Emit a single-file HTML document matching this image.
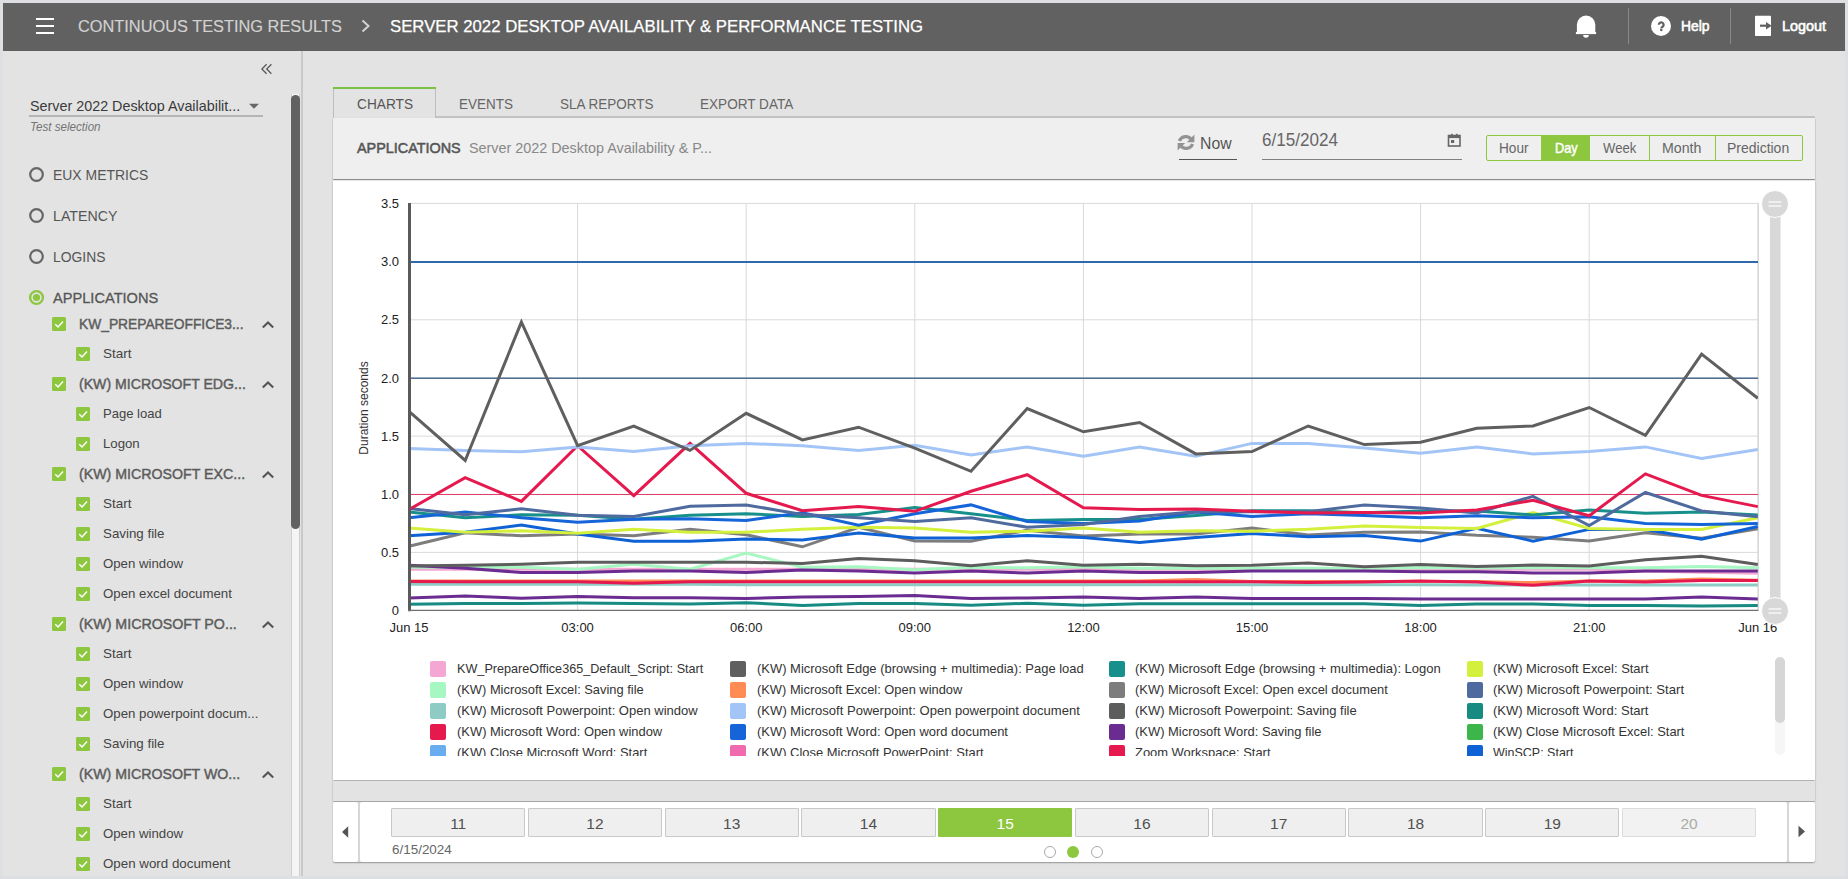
<!DOCTYPE html><html><head><meta charset="utf-8"><style>
*{margin:0;padding:0;box-sizing:border-box}
html,body{width:1848px;height:879px;overflow:hidden;background:#dedfe3;font-family:"Liberation Sans",sans-serif}
.t{position:absolute;white-space:nowrap}
.a{position:absolute}
</style></head><body>
<div class="a" style="left:3px;top:3px;width:1842px;height:873px;background:#e3e3e3"></div>
<div class="a" style="left:3px;top:3px;width:1842px;height:48px;background:#616161"></div>
<div class="a" style="left:36px;top:18px;width:18px;height:2px;background:#fff"></div>
<div class="a" style="left:36px;top:25px;width:18px;height:2px;background:#fff"></div>
<div class="a" style="left:36px;top:32px;width:18px;height:2px;background:#fff"></div>
<div class="t" style="left:77.60px;top:17.61px;font-size:17px;line-height:17px;color:#d2d2d2;transform:scaleX(0.9619);transform-origin:0 0;-webkit-text-stroke:0.15px #d2d2d2;">CONTINUOUS TESTING RESULTS</div>
<svg class="a" style="left:355px;top:14px" width="20" height="24"><polyline points="7.5,6.5 13.5,12 7.5,17.5" fill="none" stroke="#d2d2d2" stroke-width="2"/></svg>
<div class="t" style="left:390.00px;top:17.61px;font-size:17px;line-height:17px;color:#ffffff;transform:scaleX(0.9853);transform-origin:0 0;-webkit-text-stroke:0.25px #ffffff;">SERVER 2022 DESKTOP AVAILABILITY &amp; PERFORMANCE TESTING</div>
<svg class="a" style="left:1574px;top:14px" width="24" height="26" viewBox="0 0 24 26">
<path d="M2.9 18.2V10.8A9.2 9.2 0 0 1 21.3 10.8V18.2z" fill="#fff"/>
<rect x="1.9" y="18" width="20.2" height="2.1" fill="#fff"/>
<path d="M9.2 21.1h5.6a2.8 2.6 0 0 1 -5.6 0z" fill="#fff"/></svg>
<div class="a" style="left:1628px;top:8px;width:1px;height:36px;background:#8a8a8a"></div>
<div class="a" style="left:1730px;top:8px;width:1px;height:36px;background:#8a8a8a"></div>
<svg class="a" style="left:1650px;top:15px" width="22" height="22" viewBox="0 0 22 22">
<circle cx="11" cy="11" r="10" fill="#fff"/>
<path d="M8.8 9.8A2.4 2.4 0 1 1 13.04 11.34C11.9 12.1 11.3 12.4 11.3 13.5" fill="none" stroke="#616161" stroke-width="2.2"/>
<rect x="10.2" y="14" width="2.2" height="2.1" fill="#616161"/></svg>
<div class="t" style="left:1680.50px;top:18.30px;font-size:15px;line-height:15px;color:#ffffff;transform:scaleX(0.9238);transform-origin:0 0;-webkit-text-stroke:0.6px #ffffff;">Help</div>
<svg class="a" style="left:1754px;top:15px" width="18" height="22" viewBox="0 0 18 22">
<rect x="1" y="0.8" width="16" height="20.2" rx="0.8" fill="#fff"/>
<path d="M6 10.7h7" stroke="#616161" stroke-width="2.2"/>
<path d="M12 7l5.7 3.7-5.7 3.8z" fill="#616161"/></svg>
<div class="t" style="left:1782.00px;top:18.30px;font-size:15px;line-height:15px;color:#ffffff;transform:scaleX(0.9586);transform-origin:0 0;-webkit-text-stroke:0.6px #ffffff;">Logout</div>
<div class="a" style="left:301px;top:51px;width:2px;height:825px;background:#c9c9c9"></div>
<svg class="a" style="left:258px;top:60px" width="18" height="18"><polyline points="8.6,4.2 3.9,9 8.6,13.8" fill="none" stroke="#5a5a5a" stroke-width="1.3"/><polyline points="13.4,4.2 8.7,9 13.4,13.8" fill="none" stroke="#5a5a5a" stroke-width="1.3"/></svg>
<div class="t" style="left:29.60px;top:98.10px;font-size:15px;line-height:15px;color:#3a3a3a;transform:scaleX(0.9561);transform-origin:0 0;">Server 2022 Desktop Availabilit...</div>
<div class="a" style="left:29px;top:115px;width:234px;height:1.5px;background:#b5b5b5"></div>
<svg class="a" style="left:247px;top:102.4px" width="14" height="9"><polygon points="2,1.8 12,1.8 7,6.8" fill="#666"/></svg>
<div class="t" style="left:29.60px;top:120.94px;font-size:12px;line-height:12px;color:#757575;transform:scaleX(0.9678);transform-origin:0 0;font-style:italic;">Test selection</div>
<svg class="a" style="left:28px;top:165.9px" width="17" height="17"><circle cx="8.5" cy="8.5" r="6.3" fill="none" stroke="#666" stroke-width="2.2"/></svg>
<div class="t" style="left:53.00px;top:167.10px;font-size:15px;line-height:15px;color:#555555;transform:scaleX(0.9298);transform-origin:0 0;">EUX METRICS</div>
<svg class="a" style="left:28px;top:206.9px" width="17" height="17"><circle cx="8.5" cy="8.5" r="6.3" fill="none" stroke="#666" stroke-width="2.2"/></svg>
<div class="t" style="left:53.00px;top:208.10px;font-size:15px;line-height:15px;color:#555555;transform:scaleX(0.9464);transform-origin:0 0;">LATENCY</div>
<svg class="a" style="left:28px;top:247.9px" width="17" height="17"><circle cx="8.5" cy="8.5" r="6.3" fill="none" stroke="#666" stroke-width="2.2"/></svg>
<div class="t" style="left:53.00px;top:249.10px;font-size:15px;line-height:15px;color:#555555;transform:scaleX(0.9242);transform-origin:0 0;">LOGINS</div>
<svg class="a" style="left:28px;top:288.9px" width="17" height="17"><circle cx="8.5" cy="8.5" r="6.4" fill="none" stroke="#8dc63f" stroke-width="2.4"/><circle cx="8.5" cy="8.5" r="3.6" fill="#8dc63f"/></svg>
<div class="t" style="left:53.00px;top:290.10px;font-size:15px;line-height:15px;color:#555555;transform:scaleX(0.9741);transform-origin:0 0;-webkit-text-stroke:0.3px #555555;">APPLICATIONS</div>
<svg class="a" style="left:52px;top:317.0px" width="14" height="14"><rect width="14" height="14" rx="1.5" fill="#8dc63f"/><polyline points="3.3,7.3 6,10 11,4.6" fill="none" stroke="#fff" stroke-width="1.5"/></svg>
<div class="t" style="left:78.50px;top:315.80px;font-size:15px;line-height:15px;color:#5c5c5c;transform:scaleX(0.9195);transform-origin:0 0;-webkit-text-stroke:0.45px #5c5c5c;">KW_PREPAREOFFICE3...</div>
<svg class="a" style="left:260px;top:318.5px" width="16" height="12"><polyline points="2.8,8.4 8,3.4 13.2,8.4" fill="none" stroke="#555" stroke-width="2.1"/></svg>
<svg class="a" style="left:76px;top:347.0px" width="14" height="14"><rect width="14" height="14" rx="1.5" fill="#8dc63f"/><polyline points="3.3,7.3 6,10 11,4.6" fill="none" stroke="#fff" stroke-width="1.5"/></svg>
<div class="t" style="left:102.50px;top:347.20px;font-size:13px;line-height:13px;color:#444444;transform:scaleX(1.0383);transform-origin:0 0;">Start</div>
<svg class="a" style="left:52px;top:377.0px" width="14" height="14"><rect width="14" height="14" rx="1.5" fill="#8dc63f"/><polyline points="3.3,7.3 6,10 11,4.6" fill="none" stroke="#fff" stroke-width="1.5"/></svg>
<div class="t" style="left:78.50px;top:375.80px;font-size:15px;line-height:15px;color:#5c5c5c;transform:scaleX(0.9413);transform-origin:0 0;-webkit-text-stroke:0.45px #5c5c5c;">(KW) MICROSOFT EDG...</div>
<svg class="a" style="left:260px;top:378.5px" width="16" height="12"><polyline points="2.8,8.4 8,3.4 13.2,8.4" fill="none" stroke="#555" stroke-width="2.1"/></svg>
<svg class="a" style="left:76px;top:407.0px" width="14" height="14"><rect width="14" height="14" rx="1.5" fill="#8dc63f"/><polyline points="3.3,7.3 6,10 11,4.6" fill="none" stroke="#fff" stroke-width="1.5"/></svg>
<div class="t" style="left:102.50px;top:407.20px;font-size:13px;line-height:13px;color:#444444;transform:scaleX(1.0043);transform-origin:0 0;">Page load</div>
<svg class="a" style="left:76px;top:437.0px" width="14" height="14"><rect width="14" height="14" rx="1.5" fill="#8dc63f"/><polyline points="3.3,7.3 6,10 11,4.6" fill="none" stroke="#fff" stroke-width="1.5"/></svg>
<div class="t" style="left:102.50px;top:437.20px;font-size:13px;line-height:13px;color:#444444;transform:scaleX(1.0152);transform-origin:0 0;">Logon</div>
<svg class="a" style="left:52px;top:467.0px" width="14" height="14"><rect width="14" height="14" rx="1.5" fill="#8dc63f"/><polyline points="3.3,7.3 6,10 11,4.6" fill="none" stroke="#fff" stroke-width="1.5"/></svg>
<div class="t" style="left:78.50px;top:465.80px;font-size:15px;line-height:15px;color:#5c5c5c;transform:scaleX(0.9462);transform-origin:0 0;-webkit-text-stroke:0.45px #5c5c5c;">(KW) MICROSOFT EXC...</div>
<svg class="a" style="left:260px;top:468.5px" width="16" height="12"><polyline points="2.8,8.4 8,3.4 13.2,8.4" fill="none" stroke="#555" stroke-width="2.1"/></svg>
<svg class="a" style="left:76px;top:497.0px" width="14" height="14"><rect width="14" height="14" rx="1.5" fill="#8dc63f"/><polyline points="3.3,7.3 6,10 11,4.6" fill="none" stroke="#fff" stroke-width="1.5"/></svg>
<div class="t" style="left:102.50px;top:497.20px;font-size:13px;line-height:13px;color:#444444;transform:scaleX(1.0383);transform-origin:0 0;">Start</div>
<svg class="a" style="left:76px;top:527.0px" width="14" height="14"><rect width="14" height="14" rx="1.5" fill="#8dc63f"/><polyline points="3.3,7.3 6,10 11,4.6" fill="none" stroke="#fff" stroke-width="1.5"/></svg>
<div class="t" style="left:102.50px;top:527.20px;font-size:13px;line-height:13px;color:#444444;transform:scaleX(1.0250);transform-origin:0 0;">Saving file</div>
<svg class="a" style="left:76px;top:557.0px" width="14" height="14"><rect width="14" height="14" rx="1.5" fill="#8dc63f"/><polyline points="3.3,7.3 6,10 11,4.6" fill="none" stroke="#fff" stroke-width="1.5"/></svg>
<div class="t" style="left:102.50px;top:557.20px;font-size:13px;line-height:13px;color:#444444;transform:scaleX(1.0159);transform-origin:0 0;">Open window</div>
<svg class="a" style="left:76px;top:587.0px" width="14" height="14"><rect width="14" height="14" rx="1.5" fill="#8dc63f"/><polyline points="3.3,7.3 6,10 11,4.6" fill="none" stroke="#fff" stroke-width="1.5"/></svg>
<div class="t" style="left:102.50px;top:587.20px;font-size:13px;line-height:13px;color:#444444;transform:scaleX(1.0194);transform-origin:0 0;">Open excel document</div>
<svg class="a" style="left:52px;top:617.0px" width="14" height="14"><rect width="14" height="14" rx="1.5" fill="#8dc63f"/><polyline points="3.3,7.3 6,10 11,4.6" fill="none" stroke="#fff" stroke-width="1.5"/></svg>
<div class="t" style="left:78.50px;top:615.80px;font-size:15px;line-height:15px;color:#5c5c5c;transform:scaleX(0.9483);transform-origin:0 0;-webkit-text-stroke:0.45px #5c5c5c;">(KW) MICROSOFT PO...</div>
<svg class="a" style="left:260px;top:618.5px" width="16" height="12"><polyline points="2.8,8.4 8,3.4 13.2,8.4" fill="none" stroke="#555" stroke-width="2.1"/></svg>
<svg class="a" style="left:76px;top:647.0px" width="14" height="14"><rect width="14" height="14" rx="1.5" fill="#8dc63f"/><polyline points="3.3,7.3 6,10 11,4.6" fill="none" stroke="#fff" stroke-width="1.5"/></svg>
<div class="t" style="left:102.50px;top:647.20px;font-size:13px;line-height:13px;color:#444444;transform:scaleX(1.0383);transform-origin:0 0;">Start</div>
<svg class="a" style="left:76px;top:677.0px" width="14" height="14"><rect width="14" height="14" rx="1.5" fill="#8dc63f"/><polyline points="3.3,7.3 6,10 11,4.6" fill="none" stroke="#fff" stroke-width="1.5"/></svg>
<div class="t" style="left:102.50px;top:677.20px;font-size:13px;line-height:13px;color:#444444;transform:scaleX(1.0159);transform-origin:0 0;">Open window</div>
<svg class="a" style="left:76px;top:707.0px" width="14" height="14"><rect width="14" height="14" rx="1.5" fill="#8dc63f"/><polyline points="3.3,7.3 6,10 11,4.6" fill="none" stroke="#fff" stroke-width="1.5"/></svg>
<div class="t" style="left:102.50px;top:707.20px;font-size:13px;line-height:13px;color:#444444;transform:scaleX(1.0187);transform-origin:0 0;">Open powerpoint docum...</div>
<svg class="a" style="left:76px;top:737.0px" width="14" height="14"><rect width="14" height="14" rx="1.5" fill="#8dc63f"/><polyline points="3.3,7.3 6,10 11,4.6" fill="none" stroke="#fff" stroke-width="1.5"/></svg>
<div class="t" style="left:102.50px;top:737.20px;font-size:13px;line-height:13px;color:#444444;transform:scaleX(1.0250);transform-origin:0 0;">Saving file</div>
<svg class="a" style="left:52px;top:767.0px" width="14" height="14"><rect width="14" height="14" rx="1.5" fill="#8dc63f"/><polyline points="3.3,7.3 6,10 11,4.6" fill="none" stroke="#fff" stroke-width="1.5"/></svg>
<div class="t" style="left:78.50px;top:765.80px;font-size:15px;line-height:15px;color:#5c5c5c;transform:scaleX(0.9452);transform-origin:0 0;-webkit-text-stroke:0.45px #5c5c5c;">(KW) MICROSOFT WO...</div>
<svg class="a" style="left:260px;top:768.5px" width="16" height="12"><polyline points="2.8,8.4 8,3.4 13.2,8.4" fill="none" stroke="#555" stroke-width="2.1"/></svg>
<svg class="a" style="left:76px;top:797.0px" width="14" height="14"><rect width="14" height="14" rx="1.5" fill="#8dc63f"/><polyline points="3.3,7.3 6,10 11,4.6" fill="none" stroke="#fff" stroke-width="1.5"/></svg>
<div class="t" style="left:102.50px;top:797.20px;font-size:13px;line-height:13px;color:#444444;transform:scaleX(1.0383);transform-origin:0 0;">Start</div>
<svg class="a" style="left:76px;top:827.0px" width="14" height="14"><rect width="14" height="14" rx="1.5" fill="#8dc63f"/><polyline points="3.3,7.3 6,10 11,4.6" fill="none" stroke="#fff" stroke-width="1.5"/></svg>
<div class="t" style="left:102.50px;top:827.20px;font-size:13px;line-height:13px;color:#444444;transform:scaleX(1.0159);transform-origin:0 0;">Open window</div>
<svg class="a" style="left:76px;top:857.0px" width="14" height="14"><rect width="14" height="14" rx="1.5" fill="#8dc63f"/><polyline points="3.3,7.3 6,10 11,4.6" fill="none" stroke="#fff" stroke-width="1.5"/></svg>
<div class="t" style="left:102.50px;top:857.20px;font-size:13px;line-height:13px;color:#444444;transform:scaleX(1.0257);transform-origin:0 0;">Open word document</div>
<div class="a" style="left:291px;top:94px;width:9px;height:782px;background:#f4f4f4;border-left:1px solid #d0d0d0;border-right:1px solid #cfcfcf"></div>
<div class="a" style="left:291px;top:94.5px;width:9px;height:434px;background:#616161;border-radius:4.5px"></div>
<div class="a" style="left:436px;top:115.5px;width:1379px;height:2px;background:#c4c4c4"></div>
<div class="a" style="left:333px;top:87px;width:103px;height:31px;background:#e3e3e3;border-left:1px solid #bdbdbd;border-right:1px solid #bdbdbd"></div>
<div class="a" style="left:333px;top:87px;width:103px;height:2px;background:#7cc242"></div>
<div class="t" style="left:356.70px;top:96.10px;font-size:15px;line-height:15px;color:#555555;transform:scaleX(0.9121);transform-origin:0 0;">CHARTS</div>
<div class="t" style="left:459.00px;top:96.10px;font-size:15px;line-height:15px;color:#666666;transform:scaleX(0.9000);transform-origin:0 0;">EVENTS</div>
<div class="t" style="left:559.50px;top:96.10px;font-size:15px;line-height:15px;color:#666666;transform:scaleX(0.8995);transform-origin:0 0;">SLA REPORTS</div>
<div class="t" style="left:699.70px;top:96.10px;font-size:15px;line-height:15px;color:#666666;transform:scaleX(0.9049);transform-origin:0 0;">EXPORT DATA</div>
<div class="a" style="left:333px;top:179.5px;width:1482px;height:600.5px;background:#fff;box-shadow:0 1px 2px rgba(0,0,0,0.3)"></div>
<div class="a" style="left:333px;top:117.5px;width:1482px;height:61px;background:#efefef;box-shadow:0 1px 1.2px rgba(0,0,0,0.45),-0.5px 0 1px rgba(0,0,0,0.15)"></div>
<div class="t" style="left:357.00px;top:139.88px;font-size:15.5px;line-height:15.5px;color:#555555;transform:scaleX(0.9284);transform-origin:0 0;-webkit-text-stroke:0.55px #555555;">APPLICATIONS</div>
<div class="t" style="left:469.00px;top:140.30px;font-size:15px;line-height:15px;color:#888888;transform:scaleX(0.9576);transform-origin:0 0;">Server 2022 Desktop Availability &amp; P...</div>
<svg class="a" style="left:1176px;top:133px" width="20" height="19" viewBox="0 0 20 19">
<path d="M15.4 6.6A6.8 6.8 0 0 0 3.4 8" fill="none" stroke="#939393" stroke-width="3.2"/>
<path d="M18.4 1.6v7.6h-7.6z" fill="#939393"/>
<path d="M4.6 12.4a6.8 6.8 0 0 0 12 -1.4" fill="none" stroke="#939393" stroke-width="3.2"/>
<path d="M1.6 17.6v-7.6h7.6z" fill="#939393"/></svg>
<div class="t" style="left:1199.80px;top:135.11px;font-size:17px;line-height:17px;color:#555555;transform:scaleX(0.9296);transform-origin:0 0;">Now</div>
<div class="a" style="left:1179px;top:159px;width:58px;height:1.2px;background:#555"></div>
<div class="t" style="left:1262.00px;top:131.69px;font-size:17.5px;line-height:17.5px;color:#666666;transform:scaleX(0.9762);transform-origin:0 0;">6/15/2024</div>
<div class="a" style="left:1262px;top:159px;width:200px;height:1.2px;background:#808080"></div>
<svg class="a" style="left:1447px;top:133px" width="15" height="15" viewBox="0 0 15 15">
<rect x="1.5" y="2.5" width="11.5" height="10.5" fill="none" stroke="#666" stroke-width="1.6"/>
<rect x="1.5" y="2.5" width="11.5" height="2.6" fill="#666"/>
<rect x="4" y="0.8" width="1.6" height="2.5" fill="#666"/><rect x="9" y="0.8" width="1.6" height="2.5" fill="#666"/>
<rect x="4" y="7" width="3.2" height="3" fill="#666"/></svg>
<div class="a" style="left:1486px;top:135px;width:317px;height:26px;border:1px solid #8dc63f;border-radius:2px;background:#efefef"></div>
<div class="a" style="left:1541px;top:135px;width:49px;height:26px;background:#8dc63f"></div>
<div class="a" style="left:1649px;top:135px;width:1px;height:26px;background:#8dc63f"></div>
<div class="a" style="left:1714.5px;top:135px;width:1px;height:26px;background:#8dc63f"></div>
<div class="t" style="left:1499.30px;top:140.73px;font-size:14.5px;line-height:14.5px;color:#666666;transform:scaleX(0.9380);transform-origin:0 0;">Hour</div>
<div class="t" style="left:1554.60px;top:140.73px;font-size:14.5px;line-height:14.5px;color:#ffffff;transform:scaleX(0.8798);transform-origin:0 0;-webkit-text-stroke:0.5px #ffffff;">Day</div>
<div class="t" style="left:1602.90px;top:140.73px;font-size:14.5px;line-height:14.5px;color:#666666;transform:scaleX(0.9037);transform-origin:0 0;">Week</div>
<div class="t" style="left:1662.00px;top:140.73px;font-size:14.5px;line-height:14.5px;color:#666666;transform:scaleX(0.9777);transform-origin:0 0;">Month</div>
<div class="t" style="left:1727.30px;top:140.73px;font-size:14.5px;line-height:14.5px;color:#666666;transform:scaleX(0.9643);transform-origin:0 0;">Prediction</div>
<svg class="a" style="left:0;top:0" width="1848" height="879" viewBox="0 0 1848 879"><line x1="409" y1="610.6" x2="1758.5" y2="610.6" stroke="#d9d9d9" stroke-width="1"/><line x1="409" y1="552.4" x2="1758.5" y2="552.4" stroke="#d9d9d9" stroke-width="1"/><line x1="409" y1="494.3" x2="1758.5" y2="494.3" stroke="#d9d9d9" stroke-width="1"/><line x1="409" y1="436.1" x2="1758.5" y2="436.1" stroke="#d9d9d9" stroke-width="1"/><line x1="409" y1="377.9" x2="1758.5" y2="377.9" stroke="#d9d9d9" stroke-width="1"/><line x1="409" y1="319.8" x2="1758.5" y2="319.8" stroke="#d9d9d9" stroke-width="1"/><line x1="409" y1="261.6" x2="1758.5" y2="261.6" stroke="#d9d9d9" stroke-width="1"/><line x1="409" y1="203.4" x2="1758.5" y2="203.4" stroke="#d9d9d9" stroke-width="1"/><line x1="577.6" y1="203.4" x2="577.6" y2="610.4" stroke="#d9d9d9" stroke-width="1"/><line x1="746.2" y1="203.4" x2="746.2" y2="610.4" stroke="#d9d9d9" stroke-width="1"/><line x1="914.8" y1="203.4" x2="914.8" y2="610.4" stroke="#d9d9d9" stroke-width="1"/><line x1="1083.4" y1="203.4" x2="1083.4" y2="610.4" stroke="#d9d9d9" stroke-width="1"/><line x1="1252.0" y1="203.4" x2="1252.0" y2="610.4" stroke="#d9d9d9" stroke-width="1"/><line x1="1420.6" y1="203.4" x2="1420.6" y2="610.4" stroke="#d9d9d9" stroke-width="1"/><line x1="1589.2" y1="203.4" x2="1589.2" y2="610.4" stroke="#d9d9d9" stroke-width="1"/><line x1="1757.8" y1="203.4" x2="1757.8" y2="610.4" stroke="#d9d9d9" stroke-width="1"/><line x1="409" y1="262" x2="1758" y2="262" stroke="#3068b0" stroke-width="2"/><line x1="409" y1="378.3" x2="1758" y2="378.3" stroke="#4f6e96" stroke-width="1.6"/><line x1="409" y1="494.5" x2="1758" y2="494.5" stroke="#e0406a" stroke-width="1"/><polyline points="409.0,604.3 465.2,603.5 521.4,603.5 577.6,602.9 633.8,603.5 690.0,604.1 746.2,602.7 802.4,605.6 858.6,603.6 914.8,603.6 971.0,605.2 1027.2,603.3 1083.4,605.2 1139.6,603.8 1195.8,603.8 1252.0,603.8 1308.2,603.8 1364.4,603.8 1420.6,605.4 1476.8,604.1 1533.0,604.1 1589.2,605.4 1645.4,605.4 1701.6,605.9 1757.8,605.4" fill="none" stroke="#178a82" stroke-width="3" stroke-linejoin="miter"/><polyline points="409.0,598.0 465.2,596.1 521.4,598.3 577.6,596.5 633.8,597.7 690.0,597.7 746.2,598.4 802.4,597.0 858.6,596.4 914.8,595.5 971.0,598.4 1027.2,597.9 1083.4,597.0 1139.6,598.4 1195.8,597.0 1252.0,598.4 1308.2,598.4 1364.4,598.4 1420.6,599.0 1476.8,598.9 1533.0,598.9 1589.2,598.9 1645.4,598.9 1701.6,597.0 1757.8,598.9" fill="none" stroke="#6a2c91" stroke-width="3" stroke-linejoin="miter"/><polyline points="409.0,584.2 465.2,584.2 521.4,584.2 577.6,584.2 633.8,584.2 690.0,584.2 746.2,584.7 802.4,584.7 858.6,584.7 914.8,584.7 971.0,584.7 1027.2,584.7 1083.4,584.7 1139.6,584.7 1195.8,584.7 1252.0,584.7 1308.2,584.7 1364.4,584.7 1420.6,584.7 1476.8,584.9 1533.0,584.9 1589.2,584.9 1645.4,584.9 1701.6,584.9 1757.8,584.9" fill="none" stroke="#8ecbc5" stroke-width="3" stroke-linejoin="miter"/><polyline points="409.0,580.9 465.2,580.9 521.4,580.9 577.6,580.9 633.8,580.9 690.0,580.9 746.2,580.9 802.4,580.9 858.6,580.9 914.8,580.9 971.0,580.9 1027.2,580.9 1083.4,580.9 1139.6,580.9 1195.8,579.5 1252.0,581.5 1308.2,581.5 1364.4,581.5 1420.6,581.5 1476.8,581.5 1533.0,582.6 1589.2,581.1 1645.4,581.1 1701.6,579.1 1757.8,580.3" fill="none" stroke="#ff8c55" stroke-width="3" stroke-linejoin="miter"/><polyline points="409.0,581.5 465.2,581.8 521.4,581.8 577.6,581.8 633.8,583.2 690.0,581.8 746.2,581.8 802.4,581.8 858.6,581.8 914.8,581.8 971.0,581.8 1027.2,581.8 1083.4,581.8 1139.6,581.8 1195.8,581.8 1252.0,581.8 1308.2,582.6 1364.4,582.0 1420.6,581.1 1476.8,582.0 1533.0,585.3 1589.2,581.1 1645.4,582.0 1701.6,580.6 1757.8,580.6" fill="none" stroke="#e5194d" stroke-width="3" stroke-linejoin="miter"/><polyline points="409.0,569.3 465.2,569.3 521.4,569.3 577.6,569.3 633.8,569.3 690.0,569.3 746.2,569.3 802.4,569.3 858.6,569.3 914.8,569.3 971.0,569.3 1027.2,569.3 1083.4,569.3 1139.6,569.3 1195.8,569.3 1252.0,569.3 1308.2,569.3 1364.4,569.3 1420.6,569.3 1476.8,569.3 1533.0,569.3 1589.2,569.3 1645.4,571.0 1701.6,572.2 1757.8,573.3" fill="none" stroke="#f4a7d3" stroke-width="3" stroke-linejoin="miter"/><polyline points="409.0,567.3 465.2,567.3 521.4,567.3 577.6,569.3 633.8,564.3 690.0,569.3 746.2,553.0 802.4,567.2 858.6,566.8 914.8,569.7 971.0,567.2 1027.2,567.8 1083.4,566.8 1139.6,568.2 1195.8,568.2 1252.0,568.2 1308.2,568.2 1364.4,568.2 1420.6,567.8 1476.8,567.8 1533.0,567.8 1589.2,567.8 1645.4,567.8 1701.6,566.4 1757.8,567.8" fill="none" stroke="#a6f7c1" stroke-width="3" stroke-linejoin="miter"/><polyline points="409.0,565.2 465.2,568.2 521.4,572.5 577.6,572.5 633.8,571.0 690.0,571.0 746.2,572.5 802.4,570.1 858.6,571.0 914.8,573.1 971.0,571.0 1027.2,573.1 1083.4,571.0 1139.6,572.5 1195.8,572.5 1252.0,571.0 1308.2,571.0 1364.4,571.0 1420.6,571.7 1476.8,571.7 1533.0,572.9 1589.2,572.9 1645.4,570.9 1701.6,570.9 1757.8,570.9" fill="none" stroke="#6a2c91" stroke-width="3" stroke-linejoin="miter"/><polyline points="409.0,565.9 465.2,565.2 521.4,564.3 577.6,562.3 633.8,562.3 690.0,562.3 746.2,562.3 802.4,563.4 858.6,558.5 914.8,560.8 971.0,565.7 1027.2,560.8 1083.4,565.2 1139.6,564.3 1195.8,565.7 1252.0,565.2 1308.2,562.9 1364.4,566.8 1420.6,564.5 1476.8,566.4 1533.0,565.1 1589.2,565.9 1645.4,559.7 1701.6,556.2 1757.8,564.5" fill="none" stroke="#5d5d5d" stroke-width="3" stroke-linejoin="miter"/><polyline points="409.0,546.3 465.2,532.7 521.4,535.8 577.6,534.1 633.8,535.8 690.0,529.3 746.2,534.7 802.4,546.8 858.6,527.3 914.8,541.0 971.0,541.3 1027.2,530.2 1083.4,536.1 1139.6,534.1 1195.8,534.1 1252.0,528.1 1308.2,535.1 1364.4,532.2 1420.6,531.9 1476.8,535.3 1533.0,537.3 1589.2,541.1 1645.4,532.7 1701.6,538.2 1757.8,528.8" fill="none" stroke="#7d7d7d" stroke-width="3" stroke-linejoin="miter"/><polyline points="409.0,535.8 465.2,532.2 521.4,525.0 577.6,534.1 633.8,541.3 690.0,541.3 746.2,539.0 802.4,539.9 858.6,533.1 914.8,538.0 971.0,538.0 1027.2,535.5 1083.4,537.4 1139.6,542.5 1195.8,537.4 1252.0,533.6 1308.2,536.7 1364.4,535.5 1420.6,541.1 1476.8,528.4 1533.0,541.1 1589.2,529.4 1645.4,529.4 1701.6,539.1 1757.8,526.5" fill="none" stroke="#0f62d6" stroke-width="3" stroke-linejoin="miter"/><polyline points="409.0,528.1 465.2,532.2 521.4,530.8 577.6,533.2 633.8,529.3 690.0,532.2 746.2,532.2 802.4,529.3 858.6,527.3 914.8,528.1 971.0,532.2 1027.2,531.2 1083.4,528.1 1139.6,532.2 1195.8,530.8 1252.0,531.2 1308.2,529.3 1364.4,525.9 1420.6,527.5 1476.8,528.4 1533.0,512.6 1589.2,528.4 1645.4,529.4 1701.6,529.4 1757.8,517.7" fill="none" stroke="#d4f03c" stroke-width="3" stroke-linejoin="miter"/><polyline points="409.0,512.1 465.2,517.7 521.4,514.8 577.6,515.3 633.8,519.3 690.0,515.3 746.2,513.7 802.4,516.5 858.6,514.6 914.8,507.5 971.0,513.7 1027.2,520.4 1083.4,519.5 1139.6,519.5 1195.8,515.6 1252.0,510.7 1308.2,510.7 1364.4,512.7 1420.6,510.9 1476.8,510.9 1533.0,514.9 1589.2,510.0 1645.4,513.3 1701.6,511.9 1757.8,514.9" fill="none" stroke="#178f8a" stroke-width="3" stroke-linejoin="miter"/><polyline points="409.0,517.7 465.2,512.1 521.4,517.7 577.6,522.3 633.8,519.3 690.0,518.8 746.2,520.4 802.4,512.7 858.6,525.3 914.8,513.7 971.0,504.9 1027.2,521.5 1083.4,523.5 1139.6,521.0 1195.8,512.1 1252.0,516.5 1308.2,513.7 1364.4,515.6 1420.6,517.7 1476.8,515.8 1533.0,517.7 1589.2,516.7 1645.4,523.6 1701.6,524.6 1757.8,523.6" fill="none" stroke="#1565d8" stroke-width="3" stroke-linejoin="miter"/><polyline points="409.0,508.4 465.2,514.8 521.4,508.8 577.6,515.3 633.8,516.5 690.0,506.3 746.2,504.9 802.4,514.6 858.6,517.7 914.8,521.5 971.0,517.7 1027.2,527.3 1083.4,524.4 1139.6,516.5 1195.8,511.7 1252.0,511.7 1308.2,511.7 1364.4,504.9 1420.6,508.0 1476.8,512.9 1533.0,496.3 1589.2,525.5 1645.4,492.5 1701.6,510.9 1757.8,516.7" fill="none" stroke="#4f6a9e" stroke-width="3" stroke-linejoin="miter"/><polyline points="409.0,509.5 465.2,477.6 521.4,501.4 577.6,445.7 633.8,495.6 690.0,443.4 746.2,493.3 802.4,510.7 858.6,506.6 914.8,511.3 971.0,491.3 1027.2,474.7 1083.4,507.8 1139.6,509.5 1195.8,509.0 1252.0,511.3 1308.2,513.0 1364.4,512.4 1420.6,513.0 1476.8,510.0 1533.0,500.3 1589.2,515.8 1645.4,473.9 1701.6,495.4 1757.8,506.6" fill="none" stroke="#e5194d" stroke-width="3" stroke-linejoin="miter"/><polyline points="409.0,448.5 465.2,450.6 521.4,451.7 577.6,446.9 633.8,451.5 690.0,445.7 746.2,443.4 802.4,445.7 858.6,450.4 914.8,445.2 971.0,455.0 1027.2,446.9 1083.4,456.2 1139.6,446.9 1195.8,456.2 1252.0,443.4 1308.2,443.4 1364.4,448.1 1420.6,453.3 1476.8,446.9 1533.0,453.9 1589.2,451.5 1645.4,446.9 1701.6,458.5 1757.8,449.6" fill="none" stroke="#a3c4f7" stroke-width="3" stroke-linejoin="miter"/><polyline points="409.0,411.3 465.2,460.5 521.4,322.1 577.6,445.7 633.8,426.0 690.0,450.4 746.2,413.3 802.4,439.9 858.6,427.2 914.8,448.1 971.0,471.3 1027.2,408.6 1083.4,431.8 1139.6,422.5 1195.8,453.9 1252.0,451.5 1308.2,426.0 1364.4,444.6 1420.6,442.3 1476.8,428.3 1533.0,426.0 1589.2,407.5 1645.4,435.3 1701.6,354.1 1757.8,398.2" fill="none" stroke="#5f5f5f" stroke-width="3" stroke-linejoin="miter"/><line x1="409.5" y1="203" x2="409.5" y2="611.2" stroke="#5a5a5a" stroke-width="3"/><line x1="408" y1="610.4" x2="1758.5" y2="610.4" stroke="#707070" stroke-width="1.3"/><line x1="1758.5" y1="203.4" x2="1758.5" y2="610.4" stroke="#d9d9d9" stroke-width="1"/><text x="399" y="615.2" text-anchor="end" font-family="Liberation Sans" font-size="13" fill="#222">0</text><text x="399" y="557.0" text-anchor="end" font-family="Liberation Sans" font-size="13" fill="#222">0.5</text><text x="399" y="498.9" text-anchor="end" font-family="Liberation Sans" font-size="13" fill="#222">1.0</text><text x="399" y="440.7" text-anchor="end" font-family="Liberation Sans" font-size="13" fill="#222">1.5</text><text x="399" y="382.5" text-anchor="end" font-family="Liberation Sans" font-size="13" fill="#222">2.0</text><text x="399" y="324.4" text-anchor="end" font-family="Liberation Sans" font-size="13" fill="#222">2.5</text><text x="399" y="266.2" text-anchor="end" font-family="Liberation Sans" font-size="13" fill="#222">3.0</text><text x="399" y="208.0" text-anchor="end" font-family="Liberation Sans" font-size="13" fill="#222">3.5</text><text x="409.0" y="632" text-anchor="middle" font-family="Liberation Sans" font-size="13" fill="#222">Jun 15</text><text x="577.6" y="632" text-anchor="middle" font-family="Liberation Sans" font-size="13" fill="#222">03:00</text><text x="746.2" y="632" text-anchor="middle" font-family="Liberation Sans" font-size="13" fill="#222">06:00</text><text x="914.8" y="632" text-anchor="middle" font-family="Liberation Sans" font-size="13" fill="#222">09:00</text><text x="1083.4" y="632" text-anchor="middle" font-family="Liberation Sans" font-size="13" fill="#222">12:00</text><text x="1252.0" y="632" text-anchor="middle" font-family="Liberation Sans" font-size="13" fill="#222">15:00</text><text x="1420.6" y="632" text-anchor="middle" font-family="Liberation Sans" font-size="13" fill="#222">18:00</text><text x="1589.2" y="632" text-anchor="middle" font-family="Liberation Sans" font-size="13" fill="#222">21:00</text><text x="1757.8" y="632" text-anchor="middle" font-family="Liberation Sans" font-size="13" fill="#222">Jun 16</text><text transform="translate(367.5,408) rotate(-90)" text-anchor="middle" font-family="Liberation Sans" font-size="12" fill="#333">Duration seconds</text><rect x="1770" y="204" width="10.5" height="406" fill="#d8d8d8"/><circle cx="1775" cy="204" r="13.5" fill="#d8d8d8" stroke="#fff" stroke-width="1"/><line x1="1768.5" y1="202" x2="1781.5" y2="202" stroke="#fff" stroke-width="1.2"/><line x1="1768.5" y1="206" x2="1781.5" y2="206" stroke="#fff" stroke-width="1.2"/><circle cx="1775" cy="611" r="13.5" fill="#d8d8d8" stroke="#fff" stroke-width="1"/><line x1="1768.5" y1="609" x2="1781.5" y2="609" stroke="#fff" stroke-width="1.2"/><line x1="1768.5" y1="613" x2="1781.5" y2="613" stroke="#fff" stroke-width="1.2"/></svg>
<div class="a" style="left:420px;top:655px;width:1350px;height:101px;overflow:hidden">
<div class="a" style="left:10px;top:6px;width:16px;height:16px;border-radius:2px;background:#f4a7d3"></div>
<div class="t" style="left:36.70px;top:8.16px;font-size:12.8px;line-height:12.8px;color:#333333;transform:scaleX(0.9876);transform-origin:0 0;">KW_PrepareOffice365_Default_Script: Start</div>
<div class="a" style="left:10px;top:27px;width:16px;height:16px;border-radius:2px;background:#a6f7c1"></div>
<div class="t" style="left:36.70px;top:29.16px;font-size:12.8px;line-height:12.8px;color:#333333;transform:scaleX(1.0057);transform-origin:0 0;">(KW) Microsoft Excel: Saving file</div>
<div class="a" style="left:10px;top:48px;width:16px;height:16px;border-radius:2px;background:#8ecbc5"></div>
<div class="t" style="left:36.70px;top:50.16px;font-size:12.8px;line-height:12.8px;color:#333333;transform:scaleX(1.0162);transform-origin:0 0;">(KW) Microsoft Powerpoint: Open window</div>
<div class="a" style="left:10px;top:69px;width:16px;height:16px;border-radius:2px;background:#e5194d"></div>
<div class="t" style="left:36.70px;top:71.16px;font-size:12.8px;line-height:12.8px;color:#333333;transform:scaleX(1.0101);transform-origin:0 0;">(KW) Microsoft Word: Open window</div>
<div class="a" style="left:10px;top:90px;width:16px;height:16px;border-radius:2px;background:#6aacf0"></div>
<div class="t" style="left:36.70px;top:92.16px;font-size:12.8px;line-height:12.8px;color:#333333;transform:scaleX(1.0071);transform-origin:0 0;">(KW) Close Microsoft Word: Start</div>
<div class="a" style="left:310px;top:6px;width:16px;height:16px;border-radius:2px;background:#5f5f5f"></div>
<div class="t" style="left:336.50px;top:8.16px;font-size:12.8px;line-height:12.8px;color:#333333;transform:scaleX(1.0130);transform-origin:0 0;">(KW) Microsoft Edge (browsing + multimedia): Page load</div>
<div class="a" style="left:310px;top:27px;width:16px;height:16px;border-radius:2px;background:#ff8c55"></div>
<div class="t" style="left:336.50px;top:29.16px;font-size:12.8px;line-height:12.8px;color:#333333;transform:scaleX(1.0059);transform-origin:0 0;">(KW) Microsoft Excel: Open window</div>
<div class="a" style="left:310px;top:48px;width:16px;height:16px;border-radius:2px;background:#a3c4f7"></div>
<div class="t" style="left:336.50px;top:50.16px;font-size:12.8px;line-height:12.8px;color:#333333;transform:scaleX(1.0202);transform-origin:0 0;">(KW) Microsoft Powerpoint: Open powerpoint document</div>
<div class="a" style="left:310px;top:69px;width:16px;height:16px;border-radius:2px;background:#1565d8"></div>
<div class="t" style="left:336.50px;top:71.16px;font-size:12.8px;line-height:12.8px;color:#333333;transform:scaleX(1.0121);transform-origin:0 0;">(KW) Microsoft Word: Open word document</div>
<div class="a" style="left:310px;top:90px;width:16px;height:16px;border-radius:2px;background:#f06aae"></div>
<div class="t" style="left:336.50px;top:92.16px;font-size:12.8px;line-height:12.8px;color:#333333;transform:scaleX(1.0118);transform-origin:0 0;">(KW) Close Microsoft PowerPoint: Start</div>
<div class="a" style="left:688.8px;top:6px;width:16px;height:16px;border-radius:2px;background:#178f8a"></div>
<div class="t" style="left:715.00px;top:8.16px;font-size:12.8px;line-height:12.8px;color:#333333;transform:scaleX(1.0178);transform-origin:0 0;">(KW) Microsoft Edge (browsing + multimedia): Logon</div>
<div class="a" style="left:688.8px;top:27px;width:16px;height:16px;border-radius:2px;background:#7d7d7d"></div>
<div class="t" style="left:715.00px;top:29.16px;font-size:12.8px;line-height:12.8px;color:#333333;transform:scaleX(1.0072);transform-origin:0 0;">(KW) Microsoft Excel: Open excel document</div>
<div class="a" style="left:688.8px;top:48px;width:16px;height:16px;border-radius:2px;background:#5d5d5d"></div>
<div class="t" style="left:715.00px;top:50.16px;font-size:12.8px;line-height:12.8px;color:#333333;transform:scaleX(1.0156);transform-origin:0 0;">(KW) Microsoft Powerpoint: Saving file</div>
<div class="a" style="left:688.8px;top:69px;width:16px;height:16px;border-radius:2px;background:#6a2c91"></div>
<div class="t" style="left:715.00px;top:71.16px;font-size:12.8px;line-height:12.8px;color:#333333;transform:scaleX(1.0103);transform-origin:0 0;">(KW) Microsoft Word: Saving file</div>
<div class="a" style="left:688.8px;top:90px;width:16px;height:16px;border-radius:2px;background:#e5194d"></div>
<div class="t" style="left:715.00px;top:92.16px;font-size:12.8px;line-height:12.8px;color:#333333;transform:scaleX(1.0097);transform-origin:0 0;">Zoom Workspace: Start</div>
<div class="a" style="left:1047px;top:6px;width:16px;height:16px;border-radius:2px;background:#d4f03c"></div>
<div class="t" style="left:1073.00px;top:8.16px;font-size:12.8px;line-height:12.8px;color:#333333;transform:scaleX(1.0124);transform-origin:0 0;">(KW) Microsoft Excel: Start</div>
<div class="a" style="left:1047px;top:27px;width:16px;height:16px;border-radius:2px;background:#4f6a9e"></div>
<div class="t" style="left:1073.00px;top:29.16px;font-size:12.8px;line-height:12.8px;color:#333333;transform:scaleX(1.0255);transform-origin:0 0;">(KW) Microsoft Powerpoint: Start</div>
<div class="a" style="left:1047px;top:48px;width:16px;height:16px;border-radius:2px;background:#178a82"></div>
<div class="t" style="left:1073.00px;top:50.16px;font-size:12.8px;line-height:12.8px;color:#333333;transform:scaleX(1.0187);transform-origin:0 0;">(KW) Microsoft Word: Start</div>
<div class="a" style="left:1047px;top:69px;width:16px;height:16px;border-radius:2px;background:#3cb54a"></div>
<div class="t" style="left:1073.00px;top:71.16px;font-size:12.8px;line-height:12.8px;color:#333333;transform:scaleX(1.0084);transform-origin:0 0;">(KW) Close Microsoft Excel: Start</div>
<div class="a" style="left:1047px;top:90px;width:16px;height:16px;border-radius:2px;background:#0f62d6"></div>
<div class="t" style="left:1073.00px;top:92.16px;font-size:12.8px;line-height:12.8px;color:#333333;transform:scaleX(0.9758);transform-origin:0 0;">WinSCP: Start</div>
</div>
<div class="a" style="left:1775px;top:657px;width:10px;height:98px;border-radius:5px;background:#f6f6f6"></div>
<div class="a" style="left:1775px;top:657px;width:10px;height:66px;border-radius:5px;background:#d6d6d6"></div>
<div class="a" style="left:333px;top:781px;width:1482px;height:19.5px;background:#e3e3e3;box-shadow:0 1px 1.5px rgba(0,0,0,0.35)"></div>
<div class="a" style="left:333px;top:802px;width:1482px;height:60px;background:#d6d6d6;border-radius:2px;box-shadow:0 1px 1.5px rgba(0,0,0,0.35)"></div>
<div class="a" style="left:333px;top:802px;width:25px;height:60px;background:#fff;border-radius:2px"></div>
<div class="a" style="left:360px;top:802px;width:1427px;height:60px;background:#fff;border-radius:2px"></div>
<div class="a" style="left:1789px;top:802px;width:26px;height:60px;background:#fff;border-radius:2px"></div>
<svg class="a" style="left:338px;top:822px" width="14" height="20"><polygon points="10.2,4.3 10.2,15.7 4,10" fill="#555"/></svg>
<svg class="a" style="left:1794px;top:822px" width="14" height="20"><polygon points="4.5,3.8 4.5,15.2 11,9.5" fill="#555"/></svg>
<div class="a" style="left:391.0px;top:808px;width:134.4px;height:29px;background:#efefef;border:1px solid #c8c8c8;border-radius:1px"></div>
<div class="t" style="left:391.0px;top:814px;width:134.4px;text-align:center;font-size:15.5px;line-height:20px;color:#505050">11</div>
<div class="a" style="left:527.76px;top:808px;width:134.4px;height:29px;background:#efefef;border:1px solid #c8c8c8;border-radius:1px"></div>
<div class="t" style="left:527.76px;top:814px;width:134.4px;text-align:center;font-size:15.5px;line-height:20px;color:#505050">12</div>
<div class="a" style="left:664.52px;top:808px;width:134.4px;height:29px;background:#efefef;border:1px solid #c8c8c8;border-radius:1px"></div>
<div class="t" style="left:664.52px;top:814px;width:134.4px;text-align:center;font-size:15.5px;line-height:20px;color:#505050">13</div>
<div class="a" style="left:801.28px;top:808px;width:134.4px;height:29px;background:#efefef;border:1px solid #c8c8c8;border-radius:1px"></div>
<div class="t" style="left:801.28px;top:814px;width:134.4px;text-align:center;font-size:15.5px;line-height:20px;color:#505050">14</div>
<div class="a" style="left:938.04px;top:808px;width:134.4px;height:29px;background:#8dc63f;border-radius:1px"></div>
<div class="t" style="left:938.04px;top:814px;width:134.4px;text-align:center;font-size:15.5px;line-height:20px;color:#ffffff">15</div>
<div class="a" style="left:1074.8px;top:808px;width:134.4px;height:29px;background:#efefef;border:1px solid #c8c8c8;border-radius:1px"></div>
<div class="t" style="left:1074.8px;top:814px;width:134.4px;text-align:center;font-size:15.5px;line-height:20px;color:#505050">16</div>
<div class="a" style="left:1211.56px;top:808px;width:134.4px;height:29px;background:#efefef;border:1px solid #c8c8c8;border-radius:1px"></div>
<div class="t" style="left:1211.56px;top:814px;width:134.4px;text-align:center;font-size:15.5px;line-height:20px;color:#505050">17</div>
<div class="a" style="left:1348.32px;top:808px;width:134.4px;height:29px;background:#efefef;border:1px solid #c8c8c8;border-radius:1px"></div>
<div class="t" style="left:1348.32px;top:814px;width:134.4px;text-align:center;font-size:15.5px;line-height:20px;color:#505050">18</div>
<div class="a" style="left:1485.08px;top:808px;width:134.4px;height:29px;background:#efefef;border:1px solid #c8c8c8;border-radius:1px"></div>
<div class="t" style="left:1485.08px;top:814px;width:134.4px;text-align:center;font-size:15.5px;line-height:20px;color:#505050">19</div>
<div class="a" style="left:1621.84px;top:808px;width:134.4px;height:29px;background:#f2f2f2;border:1px solid #dcdcdc;border-radius:1px"></div>
<div class="t" style="left:1621.84px;top:814px;width:134.4px;text-align:center;font-size:15.5px;line-height:20px;color:#aaaaaa">20</div>
<div class="t" style="left:391.50px;top:842.80px;font-size:13px;line-height:13px;color:#666666;transform:scaleX(1.0337);transform-origin:0 0;">6/15/2024</div>
<svg class="a" style="left:1042.6px;top:845px" width="14" height="14"><circle cx="7" cy="7" r="5.5" fill="#fff" stroke="#aaa" stroke-width="1"/></svg>
<svg class="a" style="left:1066.4px;top:845px" width="14" height="14"><circle cx="7" cy="7" r="6" fill="#8dc63f"/></svg>
<svg class="a" style="left:1090.3px;top:845px" width="14" height="14"><circle cx="7" cy="7" r="5.5" fill="#fff" stroke="#aaa" stroke-width="1"/></svg>
</body></html>
